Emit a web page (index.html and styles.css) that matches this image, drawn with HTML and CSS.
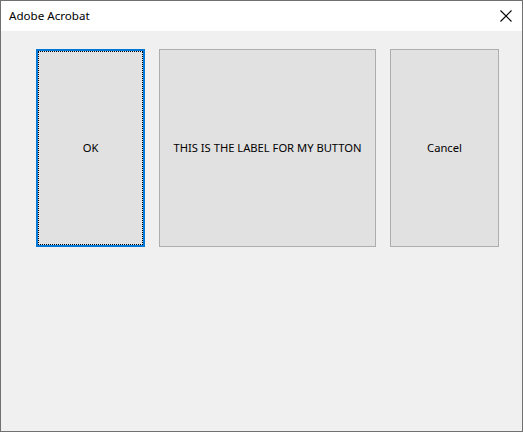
FILE: index.html
```html
<!DOCTYPE html>
<html>
<head>
<meta charset="utf-8">
<link rel="stylesheet" href="styles.css">
</head>
<body>
<div class="window">
  <div class="titlebar">
    <span class="title">Adobe Acrobat</span>
    <svg class="close" width="12" height="12" viewBox="0 0 12 12"><path d="M0.5 0.5 L11.5 11.5 M11.5 0.5 L0.5 11.5" stroke="#000" stroke-width="1.1" fill="none"/></svg>
  </div>
  <div class="content">
    <button class="btn btn-ok"><span class="focus"><span class="lbl">OK</span></span></button>
    <button class="btn btn-label"><span class="lbl">THIS IS THE LABEL FOR MY BUTTON</span></button>
    <button class="btn btn-cancel"><span class="lbl">Cancel</span></button>
  </div>
</div>
</body>
</html>
```
FILE: styles.css
```css
html, body { margin: 0; padding: 0; }
body { width: 523px; height: 432px; overflow: hidden; font-family: "Noto Sans", "Open Sans", sans-serif; }
.window {
  box-sizing: border-box;
  width: 523px;
  height: 432px;
  border: 1px solid #707070;
  background: #f0f0f0;
  display: flex;
  flex-direction: column;
}
.titlebar {
  height: 30px;
  background: #ffffff;
  display: flex;
  align-items: center;
  justify-content: space-between;
  padding: 0 10px 0 8px;
  flex: none;
}
.title { font-size: 11.6px; color: #000; position: relative; top: -1px; }
.close { display: block; margin-top: -1px; }
.content {
  display: flex;
  gap: 14px;
  padding: 18px 0 0 35px;
}
.btn {
  box-sizing: border-box;
  height: 198px;
  background: #e1e1e1;
  border: 1px solid #adadad;
  font-family: "Noto Sans", "Open Sans", sans-serif;
  font-size: 11.2px;
  color: #000;
  padding: 0;
  margin: 0;
  display: flex;
  align-items: center;
  justify-content: center;
}
.lbl { position: relative; top: -1px; }
.btn-ok { width: 109px; border: 2px solid #0078d7; padding: 0; }
.focus {
  box-sizing: border-box;
  width: 100%;
  height: 100%;
  border: 1px dotted #000;
  display: flex;
  align-items: center;
  justify-content: center;
}
.btn-label { width: 217px; }
.btn-cancel { width: 109px; }
```
